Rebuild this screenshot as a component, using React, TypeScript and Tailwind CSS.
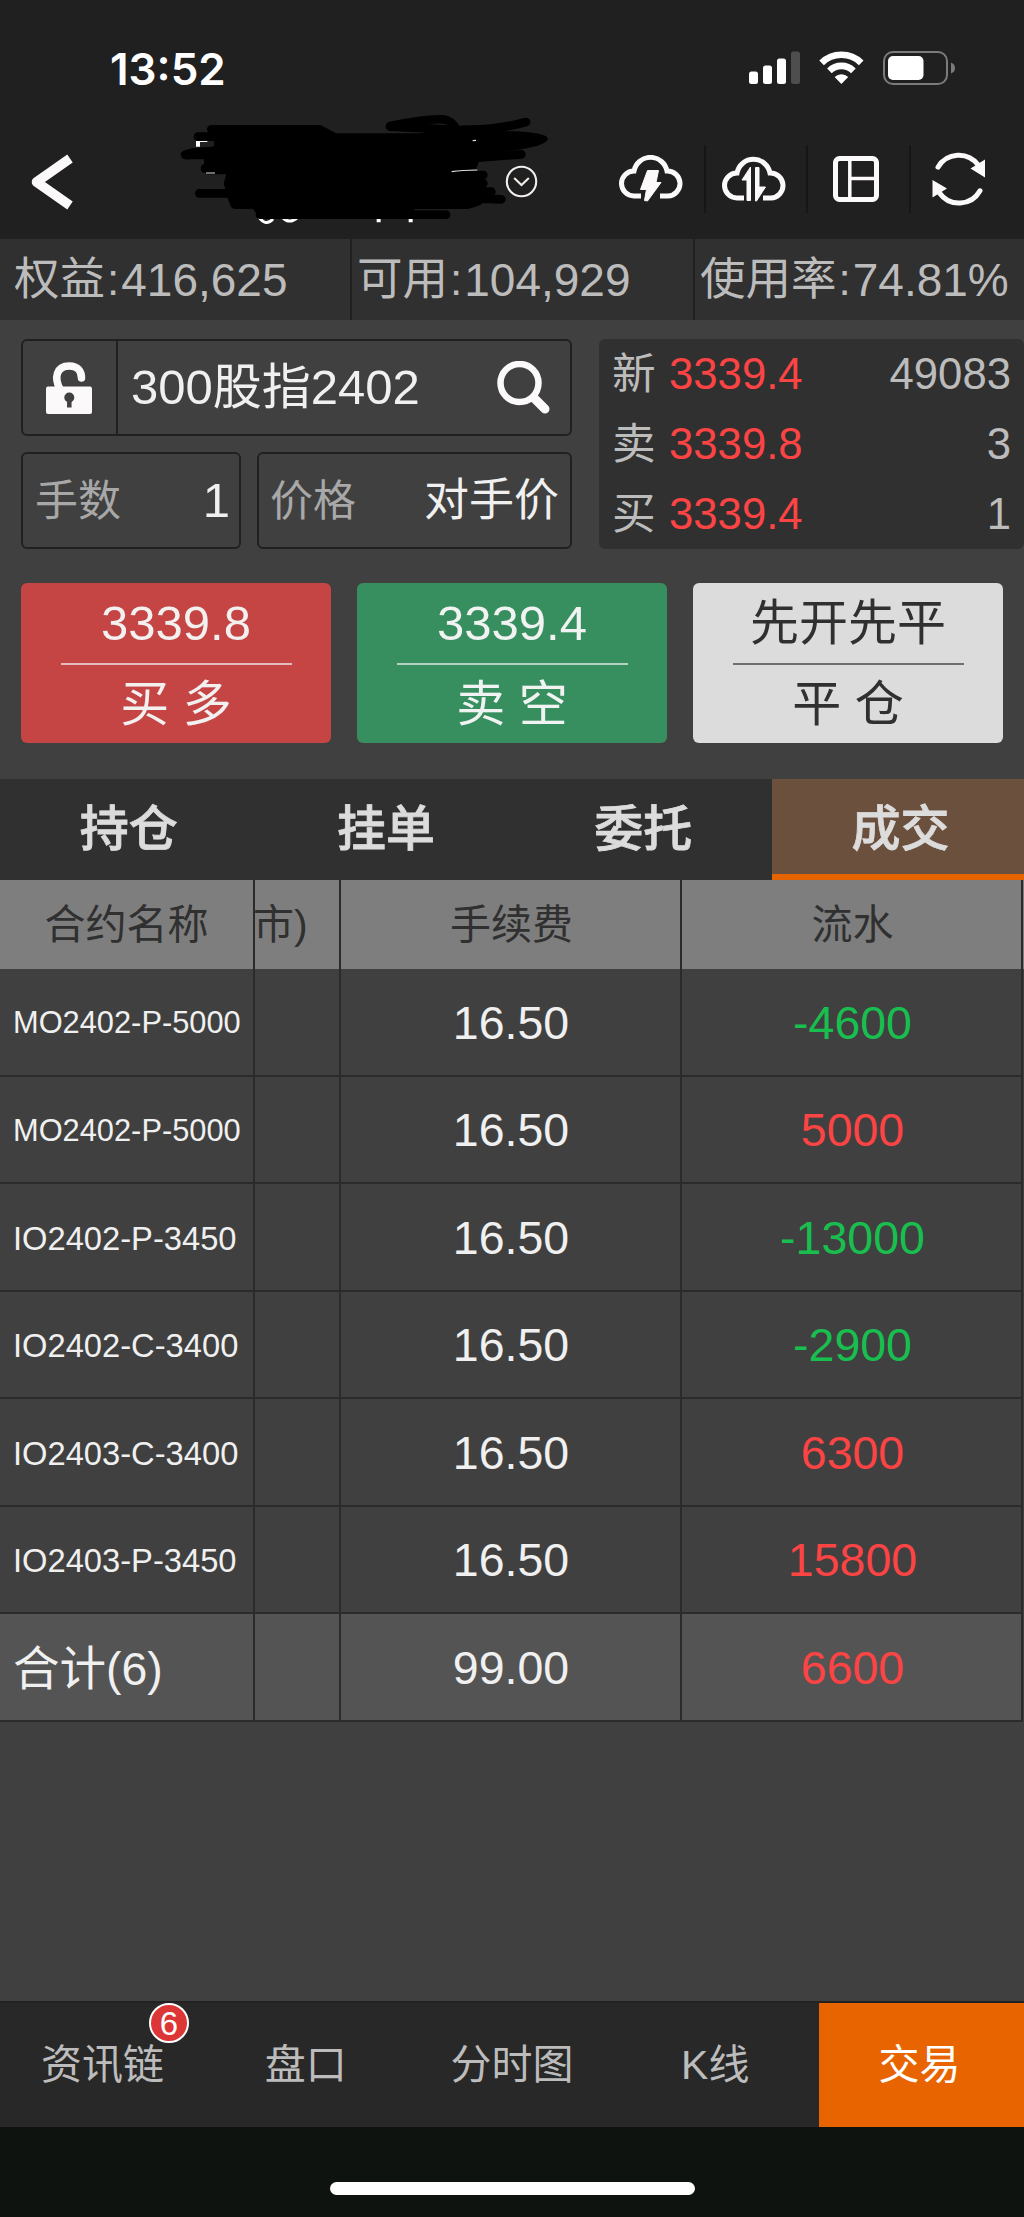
import clsx from "clsx";

const account = [
  { label: "权益", value: "416,625", className: "w-[352px] pl-[14px]" },
  { label: "可用", value: "104,929", className: "w-[343px] pl-[5px]" },
  { label: "使用率", value: "74.81%", className: "flex-1 pl-[5px]" },
];

const quotes = [
  { label: "新", price: "3339.4", volume: "49083" },
  { label: "卖", price: "3339.8", volume: "3" },
  { label: "买", price: "3339.4", volume: "1" },
];

const actions = [
  { top: "3339.8", bottom: "买 多", className: "bg-[#c54444] text-[#f3f0f0]", line: "bg-[#e3bcbc]" },
  { top: "3339.4", bottom: "卖 空", className: "bg-[#378f5f] text-[#f0f3f1]", line: "bg-[#b5d2c2]" },
  { top: "先开先平", bottom: "平 仓", className: "bg-[#dcdcdc] text-[#303030]", line: "bg-[#707070]" },
];

const tabs = ["持仓", "挂单", "委托", "成交"];

const trades = [
  { name: "MO2402-P-5000", fee: "16.50", flow: -4600 },
  { name: "MO2402-P-5000", fee: "16.50", flow: 5000 },
  { name: "IO2402-P-3450", fee: "16.50", flow: -13000 },
  { name: "IO2402-C-3400", fee: "16.50", flow: -2900 },
  { name: "IO2403-C-3400", fee: "16.50", flow: 6300 },
  { name: "IO2403-P-3450", fee: "16.50", flow: 15800 },
];

const navItems = ["资讯链", "盘口", "分时图", "K线", "交易"];

function StatusBar() {
  return (
    <div className="flex h-[119px] items-start justify-between pt-[46px] pr-[68px] pl-[110px]">
      <span className="mt-px font-['Inter',sans-serif] text-[44px] leading-[45px] font-semibold text-white">
        13:52
      </span>
      <svg className="mt-[5px]" width="207" height="35" viewBox="0 0 207 35">
        <g fill="#fff">
          <rect x="0" y="20.5" width="9" height="12.5" rx="2.5" />
          <rect x="14" y="14.5" width="9" height="18.5" rx="2.5" />
          <rect x="28" y="7.5" width="9" height="25.5" rx="2.5" />
          <rect x="42" y="0.5" width="9" height="32.5" rx="2.5" fill="#4e4e4e" />
        </g>
        <g fill="none" stroke="#fff" strokeWidth="6.6">
          <path d="M72.6 11.8a28.4 28.4 0 0 1 39.6 0" />
          <path d="M80.4 19.8a17.2 17.2 0 0 1 24 0" />
        </g>
        <path d="M92.4 33l-6.8-6.9a9.8 9.8 0 0 1 13.6 0z" fill="#fff" />
        <rect x="135" y="1" width="63" height="32" rx="9" fill="none" stroke="#7b7b7b" strokeWidth="2" />
        <rect x="139" y="5" width="35.5" height="24" rx="5" fill="#fff" />
        <path d="M202 11.500q4 1.500 4 5.500t-4 5.500z" fill="#7b7b7b" />
      </svg>
    </div>
  );
}

const CLOUD =
  "M22 43.500H15A12.500 12.500 0 0 1 15 18.500A16.800 16.800 0 0 1 48 18.500A12.500 12.500 0 0 1 49 43.500H41";

function Header() {
  return (
    <header className="flex h-[120px] items-center pl-[30px]">
      <svg width="46" height="58" viewBox="0 0 46 58" className="mt-[5px]">
        <path
          d="M40 5.500L6.500 29L40 52.500"
          fill="none"
          stroke="#fbf9fa"
          strokeWidth="9.500"
          strokeLinejoin="round"
        />
      </svg>
      <svg className="mt-[5px] ml-[429px]" width="33" height="33" viewBox="0 0 33 33">
        <g fill="none" stroke="#f1eeec" strokeWidth="2.100" strokeLinecap="round">
          <circle cx="16.500" cy="16.500" r="14.700" />
          <path d="M9.700 13.600l6.800 6.400 6.800-6.400" />
        </g>
      </svg>
      <div className="ml-[65px] flex h-[68px]">
        <div className="flex w-[103px] items-center justify-center border-r-2 border-[#161616] pr-[5px]">
          <svg width="64" height="48" viewBox="0 0 64 48">
            <path d={CLOUD} transform="translate(0 -2.500)" fill="none" stroke="#fbf9fa" strokeWidth="5" />
            <path d="M28.500 15.500h11l-2.500 12h5L28.500 46l-3-.5 2-11h-6z" fill="#fbf9fa" stroke="#fbf9fa" strokeLinejoin="round" />
          </svg>
        </div>
        <div className="flex w-[102px] items-center justify-center border-r-2 border-[#161616] pr-1">
          <svg className="mt-px" width="64" height="48" viewBox="0 0 64 48">
            <path d={CLOUD} transform="translate(0 -1.500)" fill="none" stroke="#fbf9fa" strokeWidth="5" />
            <path d="M28.500 11v33.500H25V24h-5zM33.500 11.500H37V31h6.500L34.500 45h-1z" fill="#fbf9fa" stroke="#fbf9fa" />
          </svg>
        </div>
        <div className="flex w-[103px] items-center justify-center border-r-2 border-[#161616] pr-[5px]">
          <svg width="46" height="46" viewBox="0 0 46 46" fill="none" stroke="#fbf9fa">
            <rect x="2.500" y="2.500" width="41" height="41" rx="4" strokeWidth="5" />
            <path d="M16.800 3v40M17 22.500h27" strokeWidth="3.500" />
          </svg>
        </div>
        <div className="flex w-[100px] items-center justify-center pr-[5px]">
          <svg width="54" height="54" viewBox="0 0 54 54">
            <path
              d="M6 15.200A24 24 0 0 1 46 12.800M48 38.800A24 24 0 0 1 7.500 41"
              fill="none"
              stroke="#fbf9fa"
              strokeWidth="5"
              strokeLinecap="round"
            />
            <path d="M53 7.500v18L38.500 16.500zM.5 28v17.500L15 36.500z" fill="#fbf9fa" />
          </svg>
        </div>
      </div>
    </header>
  );
}

// Pen strokes hiding the account name in the header
function Redaction() {
  return (
    <svg className="absolute top-[100px] left-[160px]" width="400" height="140" viewBox="0 0 1200 420">
      <g fill="none" stroke="#fff" strokeWidth="9">
        <path d="M293 345q22 38 46 12M367 352q22 22 46 0" />
        <path d="M656 350v17M752 350v17" strokeWidth="12" />
      </g>
      <g stroke="#000" strokeWidth="26" strokeLinecap="round" strokeLinejoin="round">
        <path d="M154 88H478L525 113H780L900 92L985 118L890 150L890 178L942 190L860 225L850 290L750 318V344H308L285 313H224L215 290L205 250L215 210H145V180L175 140V118z" />
        <path
          fill="none"
          d="M114 110H200M135 205H240M118 280H240M205 250H320M225 313H330M300 344H858M840 228L970 225M840 250H970M780 275H994M770 310Q900 290 1024 298M770 314H920Q945 310 960 300M690 78Q800 55 850 58Q875 60 890 90L960 88Q1030 85 1098 66M690 80L900 90M870 180L1084 163"
        />
      </g>
      <path
        fill="#000"
        d="M160 140Q62 142 62 162T90 178H180zM880 95Q1164 85 1164 118Q1155 143 1010 158L870 190zM850 170H950V208L850 214z"
      />
      <path d="M108 123h34v3h-22v14h-12z" fill="#fff" />
      <path d="M138 219h27M875 215q30-5 77-5M938 122l10-1" fill="none" stroke="#ddd" strokeWidth="3.500" />
    </svg>
  );
}

function AccountBar() {
  return (
    <div className="flex h-[81px] bg-[#303030] text-[45.500px] leading-none text-[#bcbcbc]">
      {account.map((item, i) => (
        <div
          key={item.label}
          className={clsx("flex items-center pt-px whitespace-nowrap", item.className, i < 2 && "border-r-2 border-[#202020]")}
        >
          <span>{item.label}</span>
          <span className="mr-0.5 ml-0.5 text-[44px]">:</span>
          <span className="text-[46px]">{item.value}</span>
        </div>
      ))}
    </div>
  );
}

function OrderForm() {
  return (
    <div className="mt-[19px] flex justify-between pl-[21px]">
      <div className="flex w-[551px] flex-col gap-4">
        <div className="flex h-[97px] items-center rounded-md border-2 border-[#202020]">
          <div className="flex h-full w-[95px] items-center justify-center border-r-2 border-[#202020]">
            <svg className="mr-0.5" width="46" height="52" viewBox="0 0 46 52">
              <path
                d="M14 27C8 16 10 4 23.500 4c8 0 12 5 12 12"
                fill="none"
                stroke="#fbf9fa"
                strokeWidth="7.500"
                strokeLinecap="round"
              />
              <rect y="24.500" width="46" height="27.500" rx="2" fill="#fbf9fa" />
              <path d="M23.300 36v9.500" stroke="#404040" strokeWidth="4.500" />
              <circle cx="23.300" cy="35.500" r="5" fill="#404040" />
            </svg>
          </div>
          <span className="ml-[13px] flex-1 text-[49px] leading-none text-[#f0f0f0]">300股指2402</span>
          <svg className="mr-[19px]" width="54" height="53" viewBox="0 0 54 53" fill="none" stroke="#fbf9fa">
            <circle cx="22.500" cy="22" r="19" strokeWidth="6.500" />
            <path d="M37 37l11 11" strokeWidth="9" strokeLinecap="round" />
          </svg>
        </div>
        <div className="flex h-[97px] justify-between leading-none">
          <div className="flex w-[220px] items-center justify-between rounded-md border-2 border-[#202020] pr-[9px] pl-3">
            <span className="pt-0.5 text-[43px] text-[#a8a8a8]">手数</span>
            <span className="text-[49px] text-[#f0f0f0]">1</span>
          </div>
          <div className="flex w-[315px] items-center justify-between rounded-md border-2 border-[#202020] pr-[11px] pl-[11px]">
            <span className="pt-0.5 text-[43px] text-[#a8a8a8]">价格</span>
            <span className="text-[45px] text-[#f0f0f0]">对手价</span>
          </div>
        </div>
      </div>
      <div className="w-[425px] rounded-md bg-[#303030] pr-[13px] pl-[13px] text-[43.700px] leading-none">
        {quotes.map((q) => (
          <div key={q.label} className="flex h-[70px] items-center text-[#bcbcbc]">
            <span className="w-[57px]">{q.label}</span>
            <span className="flex-1 text-[#fc4444]">{q.price}</span>
            <span>{q.volume}</span>
          </div>
        ))}
      </div>
    </div>
  );
}

function Actions() {
  return (
    <div className="mt-[34px] flex justify-between px-[21px]">
      {actions.map((a) => (
        <button
          key={a.bottom}
          className={clsx("flex h-[160px] w-[310px] flex-col items-center rounded-md text-[49px] leading-none", a.className)}
        >
          <span className="flex h-20 items-center pt-px">{a.top}</span>
          <span className={clsx("h-0.5 w-[231px]", a.line)} />
          <span className="flex h-[78px] items-center">{a.bottom}</span>
        </button>
      ))}
    </div>
  );
}

function Tabs() {
  return (
    <div className="mt-9 flex h-[101px] overflow-hidden bg-[#303030]">
      {tabs.map((tab) => (
        <div
          key={tab}
          className={clsx(
            "flex w-[257.300px] shrink-0 items-center justify-center text-[49px] leading-none font-medium text-[#dcdcdc] [-webkit-text-stroke:0.8px_#dcdcdc]",
            tab === "成交" && "bg-[#6a503d] shadow-[inset_0_-6px_0_#e66300]"
          )}
        >
          {tab}
        </div>
      ))}
    </div>
  );
}

const cell = "flex items-center justify-center border-r-2 border-[#2b2b2b] pt-0.5";

function TradeTable() {
  return (
    <div className="w-[1024px] leading-none">
      <div className="grid h-[89px] grid-cols-[255px_86px_341px_341px] bg-[#7e7e7e] text-[41px] text-[#303030]">
        <div className={cell}>合约名称</div>
        <div className={clsx(cell, "justify-start!")}>
          <span className="-ml-0.5">市)</span>
        </div>
        <div className={clsx(cell, "pl-0.5")}>手续费</div>
        <div className={clsx(cell, "pl-0.5")}>流水</div>
      </div>
      <div className="flex h-[753px] flex-col text-[46.500px] text-[#f0f0f0]">
        {trades.map((t, i) => (
          <div key={i} className="grid w-[1023px] flex-1 grid-cols-[255px_86px_341px_341px] border-b-2 border-[#2b2b2b]">
            <div
              className={clsx(
                cell,
                "justify-start! pt-1! pl-[13px]",
                t.name.startsWith("MO") ? "text-[30.800px]" : "text-[32.700px]"
              )}
            >
              {t.name}
            </div>
            <div className={cell} />
            <div className={clsx(cell, "pl-px")}>{t.fee}</div>
            <div className={clsx(cell, "pl-0.5", t.flow < 0 ? "text-[#18bf4f]" : "text-[#fc4444]")}>{t.flow}</div>
          </div>
        ))}
        <div className="grid w-[1023px] flex-1 grid-cols-[255px_86px_341px_341px] border-b-2 border-[#2b2b2b] bg-[#545454]">
          <div className={clsx(cell, "justify-start! pt-1! pl-[13px] text-[46.500px]")}>合计(6)</div>
          <div className={cell} />
          <div className={clsx(cell, "pl-px")}>99.00</div>
          <div className={clsx(cell, "pl-0.5 text-[#fc4444]")}>6600</div>
        </div>
      </div>
    </div>
  );
}

function BottomNav() {
  return (
    <nav className="flex h-[126px] border-t-2 border-[#222] bg-[#282828] text-[41px] leading-none text-[#bcbcbc]">
      {navItems.map((item) => (
        <div
          key={item}
          className={clsx(
            "relative flex w-1/5 items-center justify-center",
            item === "交易" && "bg-[#e86400] pr-1 text-white",
            (item === "K线" || item === "盘口") && "pr-[3px]"
          )}
        >
          {item}
          {item === "资讯链" && (
            <span className="absolute top-0 left-[149px] flex size-10 items-center justify-center rounded-full border-[2.500px] border-white bg-[#dc3636] text-[33px] text-white">
              6
            </span>
          )}
        </div>
      ))}
    </nav>
  );
}

export default function App() {
  return (
    <div className="relative flex h-[2217px] w-[1024px] flex-col overflow-hidden bg-[#404040] font-['Liberation_Sans','Noto_Sans_CJK_SC',sans-serif]">
      <div className="bg-[#202020]">
        <StatusBar />
        <Header />
      </div>
      <Redaction />
      <AccountBar />
      <OrderForm />
      <Actions />
      <Tabs />
      <TradeTable />
      <div className="flex-1" />
      <BottomNav />
      <div className="flex h-[90px] items-start justify-center bg-[#0f130f] pt-[55px]">
        <div className="h-[13px] w-[365px] rounded-full bg-white" />
      </div>
    </div>
  );
}
